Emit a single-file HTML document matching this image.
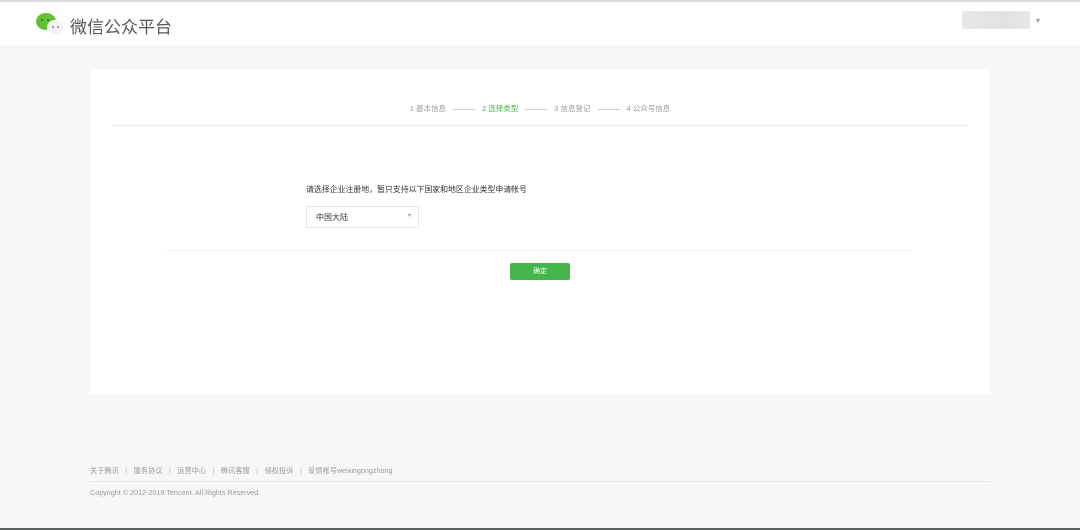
<!DOCTYPE html>
<html><head><meta charset="utf-8"><style>
*{margin:0;padding:0;box-sizing:border-box}
body{width:1080px;height:530px;background:#f6f7f9;font-family:"Liberation Sans","Noto Sans CJK SC",sans-serif;position:relative;overflow:hidden}
.hd{position:absolute;left:0;top:0;width:1080px;height:45px;background:#fff;border-top:2px solid #dcdcdc}
.logo{position:absolute;left:36px;top:11px;width:30px;height:24px}
.b1{position:absolute;left:0;top:0;width:20px;height:17px;border-radius:50%;background:#62c236}
.b2{position:absolute;left:11px;top:7px;width:17px;height:15px;border-radius:50%;background:#f0f1f4;border:1px solid #fff}
.e{position:absolute;width:2px;height:2px;border-radius:50%}
.title{position:absolute;left:70px;top:11px;font-size:17px;color:#555;letter-spacing:0}
.acct{position:absolute;left:962px;top:9px;width:68px;height:18px;background:linear-gradient(90deg,#e6e6e6,#dedede 60%,#e4e4e4);opacity:.9}
.caret{position:absolute;left:1036px;top:14px;font-size:8px;color:#999}
.card{position:absolute;left:90px;top:69px;width:900px;height:325px;background:#fff}
.steps{position:absolute;left:0;top:34px;width:900px;text-align:center;font-size:7.5px;color:#9a9a9a}
.steps span{margin:0 3px}
.steps .ln{display:inline-block;width:22px;height:1px;background:#ccc;vertical-align:middle;margin:0 4px}
.steps .on{color:#44b549}
.l1{position:absolute;left:22px;top:56px;width:856px;height:1px;background:#eaeaea}
.q{position:absolute;left:216px;top:115px;font-size:7.9px;color:#333}
.sel{position:absolute;left:216px;top:137px;width:113px;height:22px;border:1px solid #e6e6e6;border-radius:2px;font-size:8px;color:#333;padding:5px 0 0 9px}
.sel i{position:absolute;right:7px;top:5px;font-style:normal;font-size:6px;color:#999}
.l2{position:absolute;left:77px;top:181px;width:745px;height:1px;background:#eee}
.btn{position:absolute;left:420px;top:194px;width:60px;height:17px;background:#44b549;border-radius:2px;color:#fff;font-size:7px;text-align:center;line-height:17px}
.ft{position:absolute;left:90px;top:466px;font-size:7.2px;color:#999}
.ft b{font-weight:normal;margin:0 6.5px;color:#bbb}
.fl{position:absolute;left:90px;top:481px;width:900px;height:1px;background:#e6e7ea}
.cp{position:absolute;left:90px;top:488px;font-size:7.2px;color:#999}
.bot{position:absolute;left:0;top:528px;width:1080px;height:2px;background:#5a5f5f}
</style></head><body>
<div class="hd">
 <div class="logo"><div class="b1"><div class="e" style="left:5px;top:6px;background:#2f6d15"></div><div class="e" style="left:11px;top:6px;background:#2f6d15"></div></div><div class="b2"><div class="e" style="left:4px;top:5px;background:#888"></div><div class="e" style="left:9px;top:5px;background:#888"></div></div></div>
 <div class="title">微信公众平台</div>
 <div class="acct"></div><div class="caret">▾</div>
</div>
<div class="card">
 <div class="steps"><span>1 基本信息</span><i class="ln"></i><span class="on">2 选择类型</span><i class="ln"></i><span>3 信息登记</span><i class="ln"></i><span>4 公众号信息</span></div>
 <div class="l1"></div>
 <div class="q">请选择企业注册地，暂只支持以下国家和地区企业类型申请帐号</div>
 <div class="sel">中国大陆<i>▾</i></div>
 <div class="l2"></div>
 <div class="btn">确定</div>
</div>
<div class="ft">关于腾讯<b>|</b>服务协议<b>|</b>运营中心<b>|</b>腾讯客服<b>|</b>侵权投诉<b>|</b>反馈帐号weixingongzhong</div>
<div class="fl"></div>
<div class="cp">Copyright © 2012-2019 Tencent. All Rights Reserved.</div>
<div class="bot"></div>
</body></html>
